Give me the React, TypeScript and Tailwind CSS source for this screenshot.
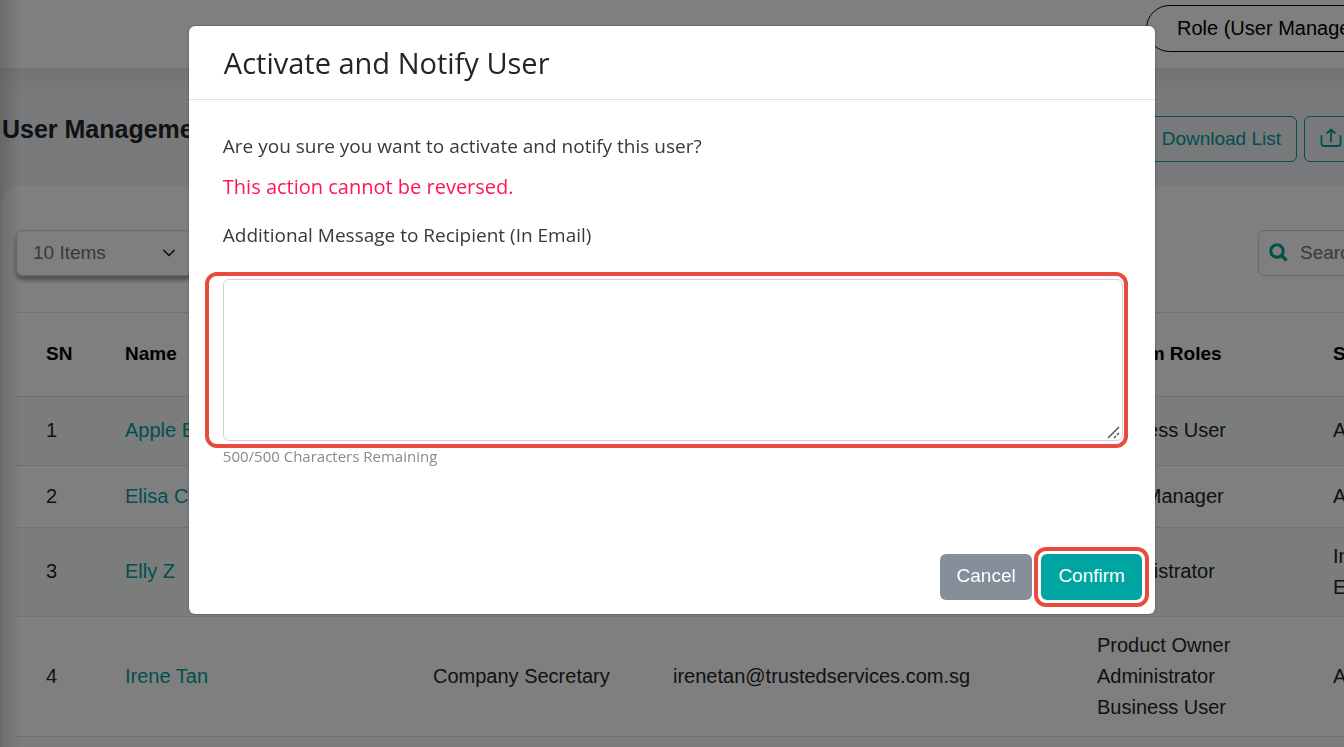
import React, { useState } from 'react';
import { ChevronDown } from 'lucide-react';

const MAX_CHARS = 500;

type User = {
  name: string;
  designation: string;
  email: string;
  roles: string[];
  status: string[];
  height: string;
};

const users: User[] = [
  { name: 'Apple Boon', designation: 'Director', email: 'apple@trustedservices.com.sg', roles: ['Business User'], status: ['Active'], height: 'h-[69px]' },
  { name: 'Elisa Chan', designation: 'Manager', email: 'elisa@trustedservices.com.sg', roles: ['Data Manager'], status: ['Active'], height: 'h-[62px]' },
  { name: 'Elly Z', designation: 'Executive', email: 'ellyz@trustedservices.com.sg', roles: ['Administrator'], status: ['Invite', 'Expired'], height: 'h-[89px]' },
  { name: 'Irene Tan', designation: 'Company Secretary', email: 'irenetan@trustedservices.com.sg', roles: ['Product Owner', 'Administrator', 'Business User'], status: ['Active'], height: 'h-[120px]' },
];

const UploadIcon: React.FC = () => (
  <svg width="22" height="20" viewBox="0 0 22 20" fill="none" stroke="currentColor" strokeWidth="1.8" strokeLinecap="round" strokeLinejoin="round" aria-hidden="true">
    <path d="M11 13.5V1.5M7.2 5l3.8-3.5L14.8 5M1.5 8v7.5a2.5 2.5 0 0 0 2.5 2.5h14a2.5 2.5 0 0 0 2.5-2.5V8" />
  </svg>
);

const SearchIcon: React.FC = () => (
  <svg width="20" height="20" viewBox="0 0 20 20" fill="none" stroke="currentColor" className="shrink-0" aria-hidden="true">
    <circle cx="8" cy="8" r="6.2" strokeWidth="3" />
    <path d="M12.4 12.4l5.2 5.2" strokeWidth="3.4" />
  </svg>
);

const ResizeGrip: React.FC = () => (
  <svg width="13" height="13" viewBox="0 0 13 13" fill="none" stroke="#555" strokeWidth="1.5" className="pointer-events-none absolute right-[3px] bottom-[2px]" aria-hidden="true">
    <path d="M1 12L12 1M7 12l2-2M10 9l2-2" />
  </svg>
);

const UsersTable: React.FC = () => (
  <table className="w-full table-fixed border-collapse text-left text-xl leading-[31px] text-[#212529]">
    <colgroup>
      <col className="w-[79px]" />
      <col className="w-[308px]" />
      <col className="w-[240px]" />
      <col className="w-[424px]" />
      <col className="w-[236px]" />
      <col />
    </colgroup>
    <thead>
      <tr className="h-[84px] border-y border-[#dee2e6] text-[19px] text-black">
        <th className="pl-[30px] pb-[2px]">SN</th>
        <th className="pl-[30px] pb-[2px]">Name</th>
        <th className="pl-[30px] pb-[2px]">Designation</th>
        <th className="pl-[30px] pb-[2px]">Email</th>
        <th className="pl-[30px] pb-[2px]">System Roles</th>
        <th className="pl-[30px] pb-[2px]">Status</th>
      </tr>
    </thead>
    <tbody>
      {users.map((user, index) => (
        <tr key={user.email} className={`${user.height} border-b border-[#dee2e6] odd:bg-[#f7f8f8]`}>
          <td className="pl-[30px] pb-px">{index + 1}</td>
          <td className="pl-[30px] pb-px">
            <a href="#user" className="text-[#00a19c]">{user.name}</a>
          </td>
          <td className="pl-[30px] pb-px">{user.designation}</td>
          <td className="pl-[30px] pb-px">{user.email}</td>
          <td className="pl-[30px] pb-px">
            {user.roles.map((role) => <div key={role}>{role}</div>)}
          </td>
          <td className="pl-[30px] pb-px">
            {user.status.map((line) => <div key={line}>{line}</div>)}
          </td>
        </tr>
      ))}
      <tr className="h-[62px] bg-[#f7f8f8]">
        <td colSpan={6} />
      </tr>
    </tbody>
  </table>
);

const ActivateDialog: React.FC = () => {
  const [message, setMessage] = useState('');

  return (
    <div className="fixed inset-0 flex items-start justify-center bg-black/50 pt-[26px]">
      <div
        role="dialog"
        aria-modal="true"
        aria-labelledby="dialog-title"
        className="w-[71.9%] rounded-md bg-white font-['Open_Sans',sans-serif] text-[19px] text-[#343a40] shadow-[0_0_2px_rgba(0,0,0,0.5)]"
      >
        <div className="border-b border-[#dee2e6] px-[35px] py-[18px]">
          <h2 id="dialog-title" className="text-[29px] leading-[37px] text-[#212529]">Activate and Notify User</h2>
        </div>
        <div className="pt-[31px] pr-8 pl-[34px] leading-[30px]">
          <p>Are you sure you want to activate and notify this user?</p>
          <p className="mt-[11px] text-xl leading-[30px] text-[#ff1654]">This action cannot be reversed.</p>
          <label htmlFor="message" className="mt-[18px] block">Additional Message to Recipient (In Email)</label>
          <div className="relative mt-[29px]">
            <textarea
              id="message"
              value={message}
              maxLength={MAX_CHARS}
              onChange={(e) => setMessage(e.target.value)}
              className="block h-[162px] w-full resize-none rounded-md border border-[#ced4da] p-3 outline-none"
            />
            <ResizeGrip />
            {/* highlight frame */}
            <div className="pointer-events-none absolute -top-[7px] -right-[5px] -bottom-[7px] -left-[18px] rounded-xl border-4 border-[#e74c3c]" />
          </div>
          <p className="mt-[3px] text-[15px] leading-6 text-[#8a8a8a]">
            {MAX_CHARS - message.length}/{MAX_CHARS} Characters Remaining
          </p>
        </div>
        <div className="flex justify-end gap-[9px] pt-[86px] pr-[13px] pb-[14px] font-['Liberation_Sans',sans-serif] text-white">
          <button type="button" className="h-[46px] w-[92px] rounded-md bg-[#868e9a] pb-[2px]">Cancel</button>
          <div className="relative">
            <button type="button" className="block h-[46px] w-[101px] rounded-md bg-[#00a5a2] pb-[2px]">Confirm</button>
            <div className="pointer-events-none absolute -inset-[7px] rounded-xl border-4 border-[#e74c3c]" />
          </div>
        </div>
      </div>
    </div>
  );
};

export default function App() {
  return (
    <div className="relative h-screen overflow-hidden bg-[#f0f2f6] font-['Liberation_Sans',sans-serif] text-[19px]">
      <div className="min-w-[1600px]">
        <header className="relative flex h-[68px] justify-end bg-white pt-[5px] pr-4 shadow-[0_2px_24px_rgba(0,0,0,0.1)]">
          <button type="button" className="h-[47px] w-[438px] rounded-full border border-black px-[30px] pb-[2px] text-left text-xl text-black">
            Role (User Management)
          </button>
        </header>
        <main>
          <div className="flex items-start justify-between pt-12 pr-4 pb-6 pl-[2px]">
            <h1 className="text-[25px] leading-[26px] font-bold text-[#212529]">User Management</h1>
            <div className="flex gap-[7px]">
              <button type="button" className="h-[46px] rounded-md border border-[#00a19c] px-[15px] text-[#00a19c]">Download List</button>
              <button type="button" className="flex h-[46px] w-[280px] items-center gap-3 rounded-md border border-[#00a19c] px-[15px] pb-[2px] text-[#00a19c]">
                <UploadIcon />
                Upload List
              </button>
            </div>
          </div>
          <section className="ml-[2px] rounded-t-2xl bg-white pt-11 pr-4 pl-[14px]">
            <div className="mb-9 flex justify-between">
              <div className="relative">
                <select
                  aria-label="Items per page"
                  className="h-[46px] w-[176px] appearance-none rounded-md border border-[#ced4da] bg-white px-4 text-[#6c757d] shadow-[0_4px_5px_rgba(0,0,0,0.4)]"
                >
                  <option>10 Items</option>
                  <option>25 Items</option>
                </select>
                <ChevronDown size={20} className="pointer-events-none absolute top-[13px] right-[13px] text-[#212529]" />
              </div>
              <label className="flex h-[46px] w-[326px] items-center gap-[11px] rounded-md border border-[#ced4da] px-[10px] text-[#00a19c]">
                <SearchIcon />
                <input type="text" aria-label="Search" placeholder="Search" className="w-full outline-none placeholder:text-[#6c757d]" />
              </label>
            </div>
            <UsersTable />
          </section>
        </main>
      </div>
      <div className="pointer-events-none absolute inset-y-0 left-0 w-5 bg-linear-to-r from-black/15 to-transparent" />
      <ActivateDialog />
    </div>
  );
}
